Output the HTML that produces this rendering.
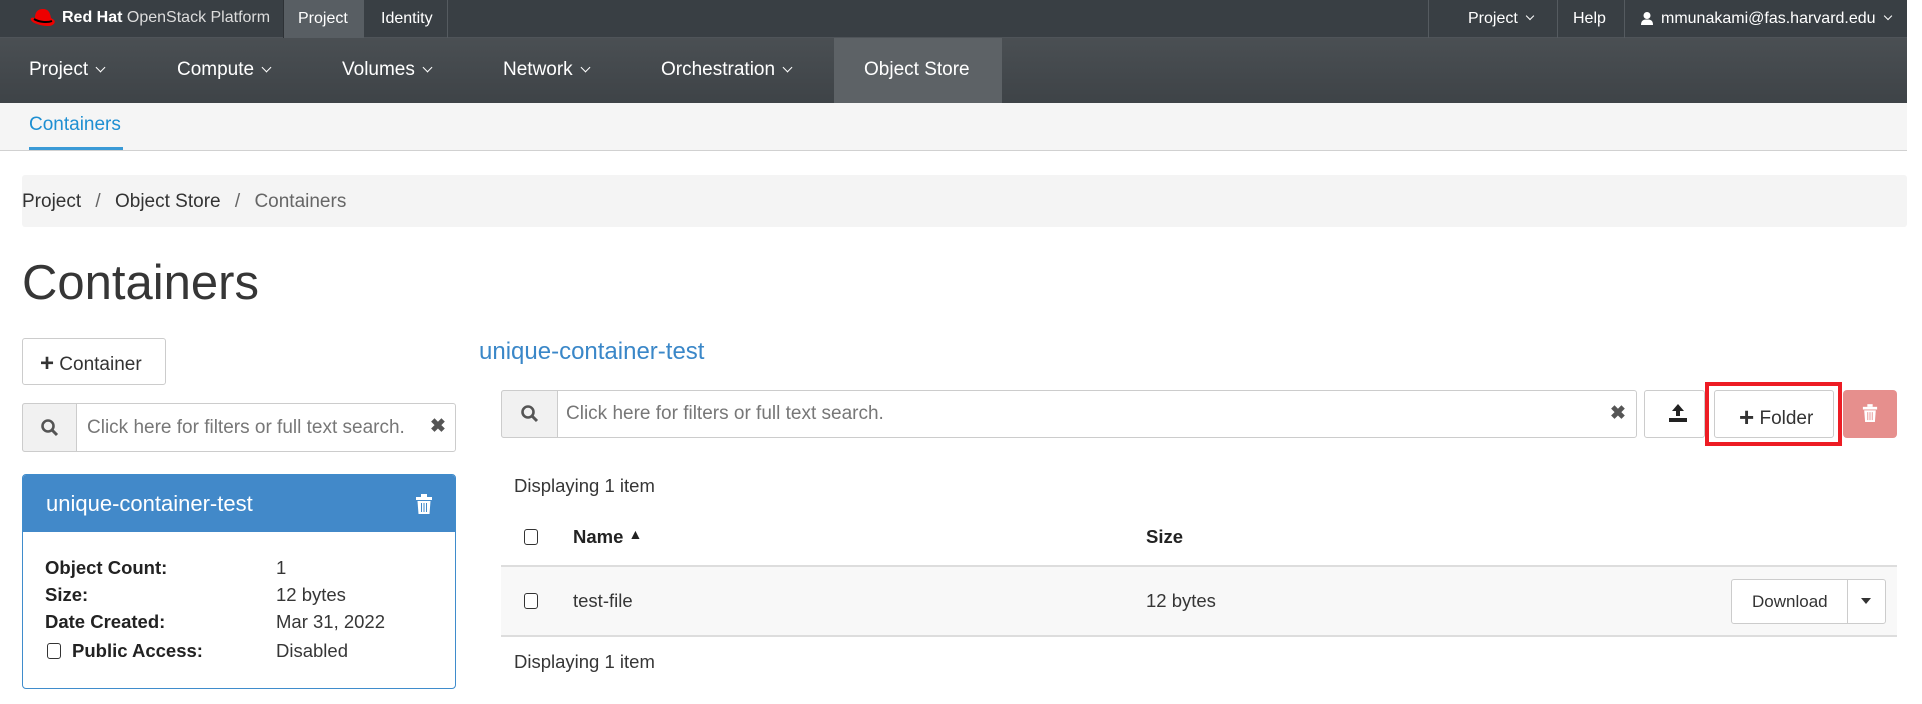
<!DOCTYPE html>
<html><head><meta charset="utf-8"><style>
*{box-sizing:border-box;margin:0;padding:0}
body{width:1922px;height:704px;overflow:hidden;background:#fff;font-family:"Liberation Sans",Arial,sans-serif;color:#363636;position:relative}
.a{position:absolute;white-space:nowrap}
.top{left:0;top:0;width:1907px;height:38px;background:#393f44;border-bottom:1px solid #4f5459}
.nav{left:0;top:38px;width:1907px;height:65px;background:linear-gradient(#4a4f53,#3e4347)}
.tw{color:#fff;font-size:16px}
.nw{color:#fff;font-size:19px}
.chev{display:inline-block;width:7px;height:7px;border-right:1.5px solid #fff;border-bottom:1.5px solid #fff;transform:rotate(45deg);margin-left:9px;position:relative;top:-4px}
.btn{position:absolute;border:1px solid #ccc;border-radius:3px;background:#fff}
.cb{position:absolute;width:14px;height:16px;border:1.5px solid #333;border-radius:3px;background:#fff}
.t{font-size:18.5px}
</style></head><body>
<div class="a top"></div>
<svg class="a" style="left:29px;top:8px" width="28" height="22" viewBox="0 0 28 22"><path d="M6 10 C6 3 10 1 14 1 C19 1 21 4 22 10 L25 12 C27 14 25 18 19 18 C12 18 3 15 2 12 C1 10 3 9 6 10Z" fill="#e00"/><path d="M5 11 C10 14 18 15 23 13" stroke="#000" stroke-width="2" fill="none"/></svg>
<div class="a" style="left:62px;top:9px;font-size:16px;color:#fff"><b>Red Hat</b> <span style="color:#ddd">OpenStack Platform</span></div>
<div class="a" style="left:283px;top:0;width:81px;height:38px;background:#585e63;border-left:1px solid #2e3236"></div>
<div class="a tw" style="left:298px;top:10px">Project</div>
<div class="a tw" style="left:381px;top:10px">Identity</div>
<div class="a" style="left:447px;top:0;width:1px;height:38px;background:#555b60"></div>
<div class="a" style="left:1428px;top:0;width:1px;height:38px;background:#555b60"></div>
<div class="a" style="left:1557px;top:0;width:1px;height:38px;background:#555b60"></div>
<div class="a" style="left:1624px;top:0;width:1px;height:38px;background:#555b60"></div>
<div class="a tw" style="left:1468px;top:10px">Project<span class="chev" style="width:6px;height:6px"></span></div>
<div class="a tw" style="left:1573px;top:10px">Help</div>
<svg class="a" style="left:1640px;top:11px" width="14" height="15" viewBox="0 0 14 15"><circle cx="7" cy="4.5" r="3.5" fill="#fff"/><path d="M1 14 C1 9 4 8.5 7 8.5 C10 8.5 13 9 13 14Z" fill="#fff"/></svg>
<div class="a tw" style="left:1661px;top:10px">mmunakami@fas.harvard.edu<span class="chev" style="width:6px;height:6px"></span></div>

<div class="a nav"></div>
<div class="a" style="left:834px;top:38px;width:168px;height:65px;background:#5d6266"></div>
<div class="a nw" style="left:29px;top:59px">Project<span class="chev"></span></div>
<div class="a nw" style="left:177px;top:59px">Compute<span class="chev"></span></div>
<div class="a nw" style="left:342px;top:59px">Volumes<span class="chev"></span></div>
<div class="a nw" style="left:503px;top:59px">Network<span class="chev"></span></div>
<div class="a nw" style="left:661px;top:59px">Orchestration<span class="chev"></span></div>
<div class="a nw" style="left:864px;top:59px">Object Store</div>

<div class="a" style="left:0;top:103px;width:1907px;height:48px;background:#f5f5f5;border-bottom:1px solid #d1d1d1"></div>
<div class="a" style="left:29px;top:114px;font-size:19px;color:#1e8fd2">Containers</div>
<div class="a" style="left:29px;top:147px;width:94px;height:3px;background:#3a9ad6"></div>

<div class="a" style="left:22px;top:175px;width:1885px;height:52px;background:#f4f4f4;border-radius:3px"></div>
<div class="a" style="left:22px;top:191px;font-size:19px;color:#333">Project <span style="color:#666;margin:0 9px">/</span> Object Store <span style="color:#666;margin:0 9px">/</span> <span style="color:#666">Containers</span></div>

<div class="a" style="left:22px;top:255px;font-size:49px;color:#363636">Containers</div>

<div class="btn" style="left:22px;top:338px;width:144px;height:47px"></div>
<div class="a" style="left:40px;top:349px;font-size:19px;color:#333"><b style="font-size:24px;position:relative;top:1px">+</b> Container</div>

<div class="btn" style="left:22px;top:403px;width:434px;height:49px"></div>
<div class="a" style="left:22px;top:403px;width:55px;height:49px;background:#f1f1f1;border:1px solid #ccc;border-radius:3px 0 0 3px"></div>
<svg class="a" style="left:40px;top:418px" width="20" height="20" viewBox="0 0 20 20"><circle cx="8" cy="8" r="5.5" stroke="#555" stroke-width="2.6" fill="none"/><path d="M12 12 L17 17" stroke="#555" stroke-width="3"/></svg>
<div class="a" style="left:87px;top:417px;font-size:19px;color:#777">Click here for filters or full text search.</div>
<div class="a" style="left:430px;top:415px;font-size:19px;color:#555;font-weight:bold">✖</div>

<div class="a" style="left:22px;top:474px;width:434px;height:215px;border:1px solid #3f8ccc;border-radius:4px;overflow:hidden">
<div style="height:57px;background:#4289c9"></div></div>
<div class="a" style="left:46px;top:491px;font-size:22px;color:#fff">unique-container-test</div>
<svg class="a" style="left:415px;top:494px" width="18" height="21" viewBox="0 0 18 21"><rect x="1" y="3" width="16" height="3" fill="#fff"/><rect x="6" y="0" width="6" height="3" fill="#fff"/><path d="M2.5 7 H15.5 L14.5 20 H3.5Z" fill="#fff"/><path d="M6.5 9 V18 M9 9 V18 M11.5 9 V18" stroke="#4289c9" stroke-width="1"/></svg>
<div class="a t" style="left:45px;top:557px;font-weight:bold;color:#222">Object Count:</div>
<div class="a t" style="left:45px;top:584px;font-weight:bold;color:#222">Size:</div>
<div class="a t" style="left:45px;top:611px;font-weight:bold;color:#222">Date Created:</div>
<div class="cb" style="left:47px;top:643px"></div>
<div class="a t" style="left:72px;top:640px;font-weight:bold;color:#222">Public Access:</div>
<div class="a t" style="left:276px;top:557px">1</div>
<div class="a t" style="left:276px;top:584px">12 bytes</div>
<div class="a t" style="left:276px;top:611px">Mar 31, 2022</div>
<div class="a t" style="left:276px;top:640px">Disabled</div>

<div class="a" style="left:479px;top:338px;font-size:24px;color:#3a87c8">unique-container-test</div>

<div class="btn" style="left:501px;top:390px;width:1136px;height:48px"></div>
<div class="a" style="left:501px;top:390px;width:57px;height:48px;background:#f1f1f1;border:1px solid #ccc;border-radius:3px 0 0 3px"></div>
<svg class="a" style="left:520px;top:404px" width="20" height="20" viewBox="0 0 20 20"><circle cx="8" cy="8" r="5.5" stroke="#555" stroke-width="2.6" fill="none"/><path d="M12 12 L17 17" stroke="#555" stroke-width="3"/></svg>
<div class="a" style="left:566px;top:403px;font-size:19px;color:#777">Click here for filters or full text search.</div>
<div class="a" style="left:1610px;top:402px;font-size:19px;color:#555;font-weight:bold">✖</div>

<div class="btn" style="left:1644px;top:390px;width:61px;height:48px"></div>
<svg class="a" style="left:1668px;top:403px" width="20" height="20" viewBox="0 0 20 20"><path d="M10 1 L16 8 H12 V13 H8 V8 H4Z" fill="#222"/><rect x="1" y="15" width="18" height="4" fill="#222"/></svg>
<div class="a" style="left:1705px;top:382px;width:137px;height:64px;border:4px solid #ed1c24"></div>
<div class="btn" style="left:1714px;top:390px;width:120px;height:48px"></div>
<div class="a" style="left:1739px;top:400px;font-size:19px;color:#333"><b style="font-size:26px;position:relative;top:2px">+</b> Folder</div>
<div class="a" style="left:1843px;top:390px;width:54px;height:48px;background:#e68f8d;border-radius:4px"></div>
<svg class="a" style="left:1862px;top:404px" width="16" height="19" viewBox="0 0 18 21"><rect x="1" y="3" width="16" height="3" fill="#fff"/><rect x="6" y="0" width="6" height="3" fill="#fff"/><path d="M2.5 7 H15.5 L14.5 20 H3.5Z" fill="#fff"/><path d="M6.5 9 V18 M9 9 V18 M11.5 9 V18" stroke="#e68f8d" stroke-width="1"/></svg>

<div class="a t" style="left:514px;top:475px">Displaying 1 item</div>
<div class="cb" style="left:524px;top:529px"></div>
<div class="a t" style="left:573px;top:526px;font-weight:bold;color:#222">Name <span style="font-size:14px;position:relative;top:-4px">&#9650;</span></div>
<div class="a t" style="left:1146px;top:526px;font-weight:bold;color:#222">Size</div>
<div class="a" style="left:501px;top:565px;width:1396px;height:72px;background:#f8f8f8;border-top:2px solid #ddd;border-bottom:2px solid #ddd"></div>
<div class="cb" style="left:524px;top:593px"></div>
<div class="a t" style="left:573px;top:590px">test-file</div>
<div class="a t" style="left:1146px;top:590px">12 bytes</div>
<div class="btn" style="left:1731px;top:579px;width:155px;height:45px"></div>
<div class="a" style="left:1847px;top:580px;width:1px;height:43px;background:#ccc"></div>
<div class="a" style="left:1752px;top:592px;font-size:17px;color:#333">Download</div>
<div class="a" style="left:1861px;top:598px;width:0;height:0;border-left:5px solid transparent;border-right:5px solid transparent;border-top:6px solid #333"></div>
<div class="a t" style="left:514px;top:651px">Displaying 1 item</div>
</body></html>
